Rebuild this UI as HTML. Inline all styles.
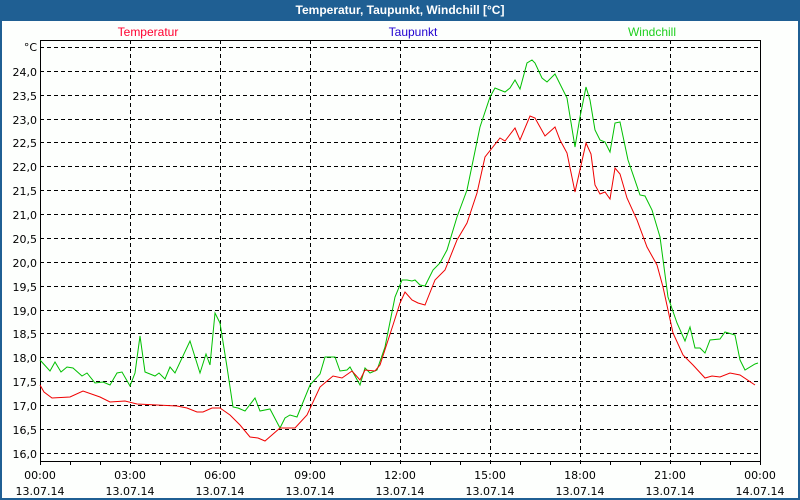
<!DOCTYPE html>
<html><head><meta charset="utf-8"><style>
html,body{margin:0;padding:0;}
body{width:800px;height:500px;background:#1f5f93;position:relative;overflow:hidden;font-family:"DejaVu Sans","Liberation Sans",sans-serif;}
.in{position:absolute;left:2px;top:21px;width:796px;height:477px;background:#fdfffd;}
.t{position:absolute;left:0;top:3px;width:800px;text-align:center;color:#fff;font-weight:bold;font-size:12px;font-family:"Liberation Sans",sans-serif;}
svg{position:absolute;left:0;top:0}
</style></head><body>
<div class="in"></div>
<div class="t">Temperatur, Taupunkt, Windchill [°C]</div>
<svg width="800" height="500" font-family="DejaVu Sans, Liberation Sans, sans-serif" font-size="11" shape-rendering="crispEdges">
<g stroke="#000" stroke-dasharray="4,3" stroke-width="1">
<line x1="40" x2="760" y1="47.5" y2="47.5"/>
<line x1="40" x2="760" y1="71.5" y2="71.5"/><line x1="40" x2="760" y1="95.5" y2="95.5"/>
<line x1="40" x2="760" y1="119.5" y2="119.5"/><line x1="40" x2="760" y1="142.5" y2="142.5"/>
<line x1="40" x2="760" y1="166.5" y2="166.5"/><line x1="40" x2="760" y1="190.5" y2="190.5"/>
<line x1="40" x2="760" y1="214.5" y2="214.5"/><line x1="40" x2="760" y1="238.5" y2="238.5"/>
<line x1="40" x2="760" y1="262.5" y2="262.5"/><line x1="40" x2="760" y1="286.5" y2="286.5"/>
<line x1="40" x2="760" y1="310.5" y2="310.5"/><line x1="40" x2="760" y1="333.5" y2="333.5"/>
<line x1="40" x2="760" y1="357.5" y2="357.5"/><line x1="40" x2="760" y1="381.5" y2="381.5"/>
<line x1="40" x2="760" y1="405.5" y2="405.5"/><line x1="40" x2="760" y1="429.5" y2="429.5"/>
<line x1="40" x2="760" y1="453.5" y2="453.5"/>
<line y1="40" y2="465" x1="130.5" x2="130.5"/><line y1="40" y2="465" x1="220.5" x2="220.5"/>
<line y1="40" y2="465" x1="310.5" x2="310.5"/><line y1="40" y2="465" x1="400.5" x2="400.5"/>
<line y1="40" y2="465" x1="490.5" x2="490.5"/><line y1="40" y2="465" x1="580.5" x2="580.5"/>
<line y1="40" y2="465" x1="670.5" x2="670.5"/>
</g>
<g stroke="#000" stroke-width="1">
<rect x="40.5" y="40.5" width="720" height="421" fill="none"/>
<path d="M70.5 461v4M100.5 461v4M160.5 461v4M190.5 461v4M250.5 461v4M280.5 461v4M340.5 461v4M370.5 461v4M430.5 461v4M460.5 461v4M520.5 461v4M550.5 461v4M610.5 461v4M640.5 461v4M700.5 461v4M730.5 461v4M40.5 461v4M760.5 461v4"/>
</g>
<g shape-rendering="auto">
<polyline fill="none" stroke="#00c000" stroke-width="1" points="40,360 50,371 55,362 61,372 67,367 73,368 82,376 87,373 95,383 103,382 110,385 117,373 122,372 130,386 135,373 140,336 145,372 155,376 159,373 165,379 170,367 175,373 190,341 200,373 206,354 210,365 215,313 220,323 227,367 233,407 238,408 245,411 255,398 260,411 270,409 280,428 285,418 290,415 297,417 310,385 320,374 325,357 335,357 340,371 347,370 350,367 360,385 365,368 370,373 377,370 385,347 395,297 402,280 407,280 412,281 415,280 420,285 425,286 433,270 440,263 447,250 457,217 467,190 480,127 490,97 495,88 505,92 510,88 515,80 520,89 527,63 532,60 535,63 542,78 547,82 555,74 567,98 575,147 580,117 586,87 590,100 595,130 600,140 605,142 610,152 615,123 620,122 628,160 640,195 645,196 652,210 660,237 668,297 677,323 685,341 690,327 695,348 700,348 705,353 710,340 720,339 725,332 735,335 740,360 745,370 755,364 758,363"/>
<polyline fill="none" stroke="#f00000" stroke-width="1" points="40,385 44,392 52,398 70,397 83,391 100,397 110,402 125,401 137,404 177,406 187,408 197,412 203,412 212,408 220,408 230,415 240,425 250,437 258,438 265,441 280,428 295,428 307,415 320,387 333,376 342,378 352,371 360,380 365,370 375,371 380,365 393,325 400,303 405,292 412,300 418,303 425,305 435,280 445,270 457,240 467,223 477,193 485,157 500,138 505,141 515,128 520,140 530,116 535,118 545,136 555,127 560,140 567,153 575,192 586,143 591,154 595,185 600,194 605,192 610,199 615,168 620,174 627,198 637,220 647,247 657,265 663,287 673,333 683,355 693,365 705,378 712,376 720,377 730,373 740,375 755,385"/>
</g>
<g font-size="12" font-family="Liberation Sans, sans-serif" shape-rendering="auto">
<text x="148" y="36" fill="#ff0030" text-anchor="middle">Temperatur</text>
<text x="413" y="36" fill="#2000d0" text-anchor="middle">Taupunkt</text>
<text x="652" y="36" fill="#20d020" text-anchor="middle">Windchill</text>
</g>
<g text-anchor="end" fill="#000">
<text x="37" y="51">°C</text>
<text x="37" y="76">24,0</text><text x="37" y="100">23,5</text><text x="37" y="124">23,0</text>
<text x="37" y="147">22,5</text><text x="37" y="171">22,0</text><text x="37" y="195">21,5</text>
<text x="37" y="219">21,0</text><text x="37" y="243">20,5</text><text x="37" y="267">20,0</text>
<text x="37" y="291">19,5</text><text x="37" y="315">19,0</text><text x="37" y="338">18,5</text>
<text x="37" y="362">18,0</text><text x="37" y="386">17,5</text><text x="37" y="410">17,0</text>
<text x="37" y="434">16,5</text><text x="37" y="458">16,0</text>
</g>
<g text-anchor="middle" fill="#000">
<text x="40" y="479">00:00</text><text x="40" y="495">13.07.14</text>
<text x="130" y="479">03:00</text><text x="130" y="495">13.07.14</text>
<text x="220" y="479">06:00</text><text x="220" y="495">13.07.14</text>
<text x="310" y="479">09:00</text><text x="310" y="495">13.07.14</text>
<text x="400" y="479">12:00</text><text x="400" y="495">13.07.14</text>
<text x="490" y="479">15:00</text><text x="490" y="495">13.07.14</text>
<text x="580" y="479">18:00</text><text x="580" y="495">13.07.14</text>
<text x="670" y="479">21:00</text><text x="670" y="495">13.07.14</text>
<text x="760" y="479">00:00</text><text x="760" y="495">14.07.14</text>
</g>
</svg>
</body></html>
